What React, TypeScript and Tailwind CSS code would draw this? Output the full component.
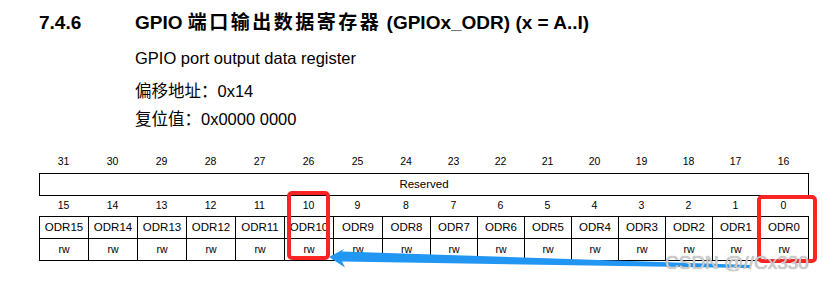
const font = "font-['Liberation_Sans','Noto_Sans_CJK_SC',sans-serif]";

const cols = "grid grid-cols-[repeat(7,49px)_48px_repeat(7,47px)_49px]";

const high = Array.from({ length: 16 }, (_, i) => 31 - i);
const low = Array.from({ length: 16 }, (_, i) => 15 - i);

export default function App() {
  return (
    <div className={`relative w-[823px] h-[281px] overflow-hidden bg-white text-black ${font}`}>
      <div className="pt-[11px] pl-[39px]">
        {/* section heading */}
        <div className="flex h-[24px] items-center text-[19px] font-bold leading-[24px]">
          <span className="w-[96px]">7.4.6</span>
          <span>
            GPIO <span className="tracking-[2.5px]">端口输出数据寄存器</span> (GPIOx_ODR) (x = A..I)
          </span>
        </div>

        <div className="ml-[96px] text-[16.5px]">
          <div className="mt-[11px] flex h-[24px] items-center">GPIO port output data register</div>
          <div className="mt-[9px] flex h-[24px] items-center">偏移地址：0x14</div>
          <div className="mt-[4px] flex h-[24px] items-center">复位值：0x0000 0000</div>
        </div>

        {/* register layout */}
        <div className="mt-[20px] w-[770px]">
          <div className={`${cols} h-[22px] text-[10.5px]`}>
            {high.map((n) => (
              <div key={n} className="flex items-center justify-center">
                {n}
              </div>
            ))}
          </div>
          <div className="flex h-[23px] items-center justify-center border border-black text-[11.5px]">
            Reserved
          </div>
          <div className={`${cols} h-[20px] text-[10.5px]`}>
            {low.map((n) => (
              <div key={n} className="flex items-center justify-center">
                {n}
              </div>
            ))}
          </div>
          <div className={`${cols} border-l border-t border-black`}>
            {low.map((n) => (
              <div
                key={`odr${n}`}
                className="flex h-[22px] items-center justify-center border-b border-r border-black text-[11.5px]"
              >
                ODR{n}
              </div>
            ))}
            {low.map((n) => (
              <div
                key={`rw${n}`}
                className="flex h-[22px] items-center justify-center border-b border-r border-black text-[10.5px]"
              >
                rw
              </div>
            ))}
          </div>
        </div>
      </div>

      {/* annotations drawn over the table */}
      <div className="absolute left-[287px] top-[191px] h-[69px] w-[43px] rounded-[5px] border-[4px] border-[#fb2424]" />
      <div className="absolute left-[757px] top-[195px] h-[68px] w-[60px] rounded-[5px] border-[4px] border-[#fb2424]" />

      <svg className="absolute left-0 top-0" width="823" height="281" viewBox="0 0 823 281">
        <polygon
          points="329,257 344,249 342,251.5 750,265 750,268 342,261.5 345,267.5"
          fill="#2196f3"
        />
      </svg>

      <div className="absolute left-[665px] top-[251px] text-[19px] leading-[24px] text-[#cfcfcf] [text-shadow:0_0_1px_#8a8a8a]">
        CSDN @//Cx330
      </div>
    </div>
  );
}
